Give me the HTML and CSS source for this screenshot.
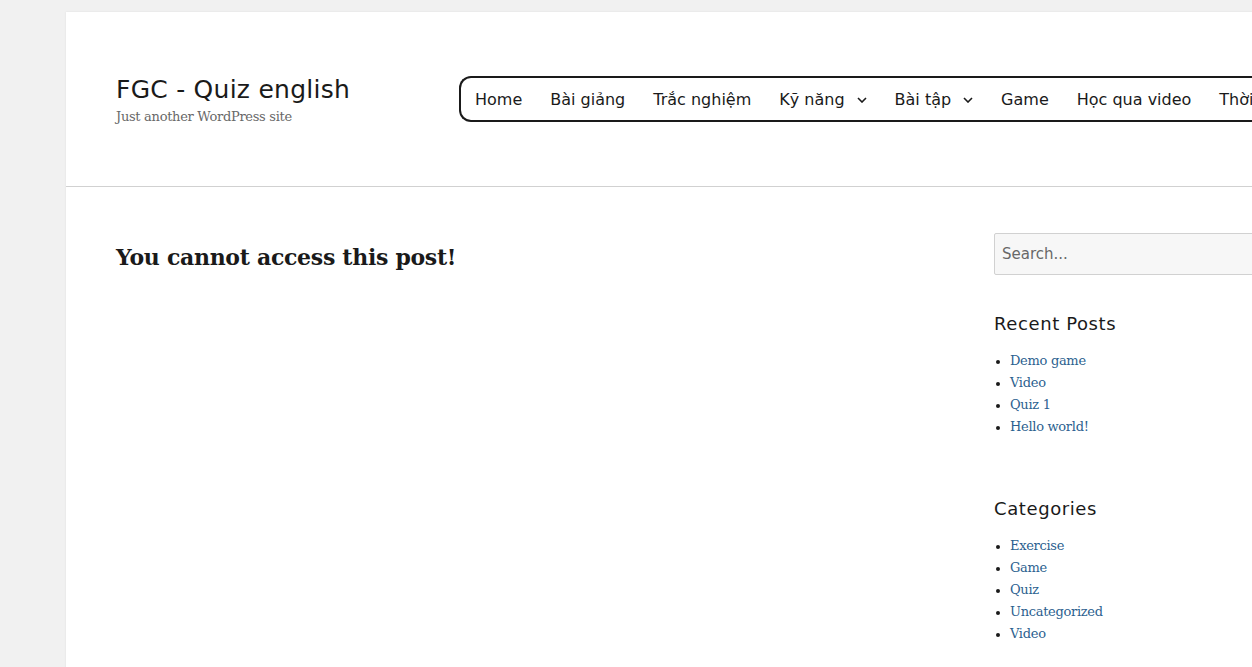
FILE: index.html
```html
<!DOCTYPE html>
<html lang="vi">
<head>
<meta charset="utf-8">
<title>You cannot access this post! – FGC - Quiz english</title>
<link rel="stylesheet" href="styles.css">
</head>
<body>
<div class="site">
  <header class="site-header">
    <div class="branding">
      <p class="site-title">FGC - Quiz english</p>
      <p class="site-description">Just another WordPress site</p>
    </div>
    <nav class="main-nav">
      <ul class="menu">
        <li><a href="#">Home</a></li>
        <li><a href="#">Bài giảng</a></li>
        <li><a href="#">Trắc nghiệm</a></li>
        <li class="has-children"><a href="#">Kỹ năng</a><svg class="chev" width="10" height="6" viewBox="0 0 10 6"><path d="M1 1 L5 5 L9 1" fill="none" stroke="#1a1a1a" stroke-width="1.6"/></svg></li>
        <li class="has-children"><a href="#">Bài tập</a><svg class="chev" width="10" height="6" viewBox="0 0 10 6"><path d="M1 1 L5 5 L9 1" fill="none" stroke="#1a1a1a" stroke-width="1.6"/></svg></li>
        <li><a href="#">Game</a></li>
        <li><a href="#">Học qua video</a></li>
        <li><a href="#">Thời gian biểu</a></li>
      </ul>
    </nav>
  </header>
  <div class="site-content">
    <main class="content-area">
      <h1 class="entry-title">You cannot access this post!</h1>
    </main>
    <aside class="sidebar">
      <section class="widget search-widget">
        <input class="search-field" type="search" placeholder="Search...">
      </section>
      <section class="widget">
        <h2 class="widget-title">Recent Posts</h2>
        <ul class="widget-list">
          <li><a href="#">Demo game</a></li>
          <li><a href="#">Video</a></li>
          <li><a href="#">Quiz 1</a></li>
          <li><a href="#">Hello world!</a></li>
        </ul>
      </section>
      <section class="widget">
        <h2 class="widget-title">Categories</h2>
        <ul class="widget-list">
          <li><a href="#">Exercise</a></li>
          <li><a href="#">Game</a></li>
          <li><a href="#">Quiz</a></li>
          <li><a href="#">Uncategorized</a></li>
          <li><a href="#">Video</a></li>
        </ul>
      </section>
    </aside>
  </div>
</div>
</body>
</html>
```

FILE: styles.css
```css
html, body {
  margin: 0;
  padding: 0;
}
body {
  background: #f1f1f1;
  overflow: hidden;
  color: #1a1a1a;
  font-family: "DejaVu Serif", "Liberation Serif", serif;
}
.site {
  margin: 12px 0 0 66px;
  width: 1250px;
  background: #fff;
  min-height: 700px;
  box-shadow: 0 0 2px rgba(0,0,0,0.08);
}
.site-header {
  height: 174px;
  border-bottom: 1px solid #d1d1d1;
  display: flex;
  align-items: flex-start;
  padding: 0 0 0 50px;
  box-sizing: content-box;
}
.branding {
  padding-top: 62px;
  width: 343px;
  flex: none;
}
.site-title {
  margin: 0 0 1px;
  font-family: "DejaVu Sans", sans-serif;
  font-size: 25px;
  line-height: 32px;
  letter-spacing: 0.25px;
  font-weight: 400;
  color: #1a1a1a;
}
.site-description {
  margin: 0;
  font-size: 13px;
  line-height: 20px;
  color: #686868;
  letter-spacing: -0.3px;
}
.main-nav {
  margin-top: 64px;
  border: 2px solid #1a1a1a;
  border-right: none;
  border-radius: 12px 0 0 12px;
  height: 42px;
  flex: 1;
  overflow: hidden;
}
.menu {
  list-style: none;
  margin: 0;
  padding: 0;
  display: flex;
  white-space: nowrap;
  height: 42px;
  align-items: center;
}
.menu li {
  display: flex;
  align-items: center;
  padding: 0 14px;
  flex: none;
}
.menu a {
  font-family: "DejaVu Sans", sans-serif;
  font-size: 16px;
  letter-spacing: 0;
  color: #1a1a1a;
  text-decoration: none;
  line-height: 22px;
  position: relative;
  top: 1px;
}
.chev {
  margin-left: 12px;
  margin-top: 2px;
}
.site-content {
  display: flex;
  padding: 0 0 0 50px;
}
.content-area {
  flex: 1;
  padding-top: 54px;
}
.entry-title {
  margin: 0;
  font-size: 22px;
  line-height: 32px;
  font-weight: 700;
  letter-spacing: -0.3px;
  color: #1a1a1a;
}
.sidebar {
  width: 322px;
  flex: none;
  padding-top: 46px;
}
.search-field {
  display: block;
  width: 100%;
  box-sizing: border-box;
  height: 42px;
  margin: 0;
  background: #f7f7f7;
  border: 1px solid #d1d1d1;
  border-radius: 2px;
  padding: 0 7px;
  font-family: "DejaVu Sans", sans-serif;
  font-size: 15px;
  color: #1a1a1a;
}
.search-field::placeholder {
  color: #686868;
}
.widget {
  margin-bottom: 58px;
}
.search-widget {
  margin-bottom: 36px;
}
.widget-title {
  margin: 0 0 13px;
  font-family: "DejaVu Sans", sans-serif;
  font-size: 18px;
  line-height: 26px;
  font-weight: 400;
  letter-spacing: 0.6px;
  color: #1a1a1a;
}
.widget-list {
  margin: 0;
  padding: 0 0 0 16px;
  list-style: disc;
  font-size: 13px;
  line-height: 22px;
}
.widget-list li::marker {
  color: #1a1a1a;
  font-size: 12px;
}
.widget-list a {
  color: #2c5f8f;
  text-decoration: none;
  letter-spacing: -0.3px;
}
```
